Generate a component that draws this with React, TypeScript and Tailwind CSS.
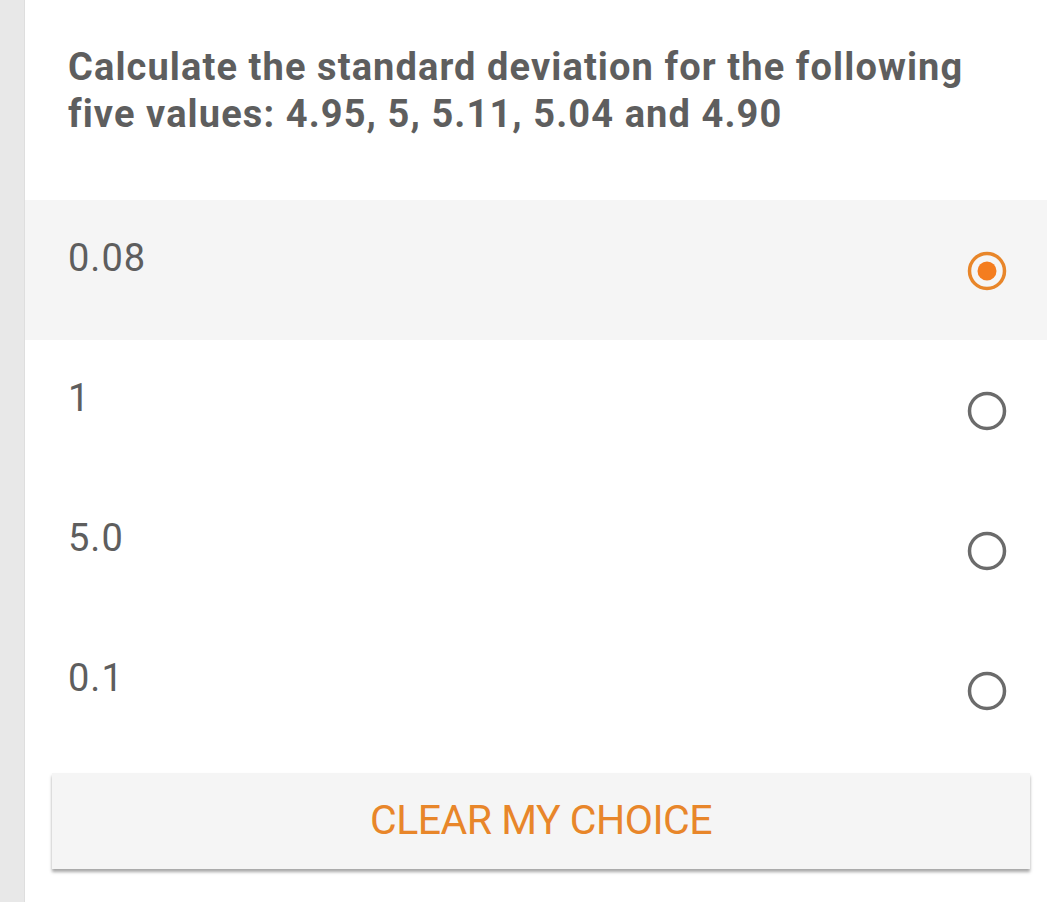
import React, { useState } from 'react';

const options = ['0.08', '1', '5.0', '0.1'];

const Radio: React.FC<{ checked: boolean }> = ({ checked }) => (
    <svg width="42" height="42" viewBox="0 0 42 42">
        {checked ? (
            <>
                <circle cx="21" cy="21" r="17.5" fill="none" stroke="#e8862a" strokeWidth="3.5" />
                <circle cx="21" cy="21" r="9.5" fill="#f47d1f" />
            </>
        ) : (
            <circle cx="21" cy="21" r="17.5" fill="none" stroke="#6b6b6b" strokeWidth="3.5" />
        )}
    </svg>
);

export default function App() {
    const [selected, setSelected] = useState<number | null>(0);

    return (
        <div className="flex w-[1047px] h-[902px] bg-white overflow-hidden" style={{ fontFamily: 'Roboto, "Liberation Sans", sans-serif' }}>
            <div className="w-[25px] shrink-0 bg-[#e8e8e8] border-r border-[#dedede]" />
            <div className="flex-1 flex flex-col">
                <div className="h-[200px] pl-[43px] pr-[40px] pt-[44px]">
                    <p className="text-[38px] leading-[47px] font-bold text-[#5e5e5e] tracking-[1.1px]">
                        Calculate the standard deviation for the following five values: 4.95, 5, 5.11, 5.04 and 4.90
                    </p>
                </div>
                {options.map((opt, i) => (
                    <div
                        key={opt}
                        onClick={() => setSelected(i)}
                        className={`h-[140px] flex justify-between pl-[43px] pr-[39px] cursor-pointer ${selected === i ? 'bg-[#f5f5f5]' : 'bg-white'}`}
                    >
                        <span className="pt-[36px] text-[38px] leading-[44px] text-[#5e5e5e] tracking-[1px]">{opt}</span>
                        <div className="pt-[50px]">
                            <Radio checked={selected === i} />
                        </div>
                    </div>
                ))}
                <div className="pl-[27px] pr-[17px] pt-[13px]">
                    <button
                        onClick={() => setSelected(null)}
                        className="w-full h-[96px] bg-[#f5f5f5] text-[#e8862a] text-[41px] tracking-[-0.5px] shadow-[0_3px_3px_rgba(0,0,0,0.35)]"
                    >
                        CLEAR MY CHOICE
                    </button>
                </div>
            </div>
        </div>
    );
}
